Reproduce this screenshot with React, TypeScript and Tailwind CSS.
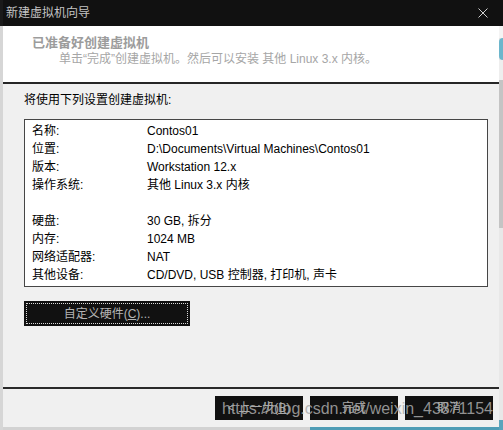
import React from "react";

const rows: [string, string][] = [
  ["名称:", "Contos01"],
  ["位置:", "D:\\Documents\\Virtual Machines\\Contos01"],
  ["版本:", "Workstation 12.x"],
  ["操作系统:", "其他 Linux 3.x 内核"],
  ["", ""],
  ["硬盘:", "30 GB, 拆分"],
  ["内存:", "1024 MB"],
  ["网络适配器:", "NAT"],
  ["其他设备:", "CD/DVD, USB 控制器, 打印机, 声卡"],
];

function FooterButton({ children }: { children: React.ReactNode }) {
  return (
    <div className="w-[88px] h-[24px] bg-[#111] flex items-center justify-center text-[12px] text-[#a8a8a8]">
      {children}
    </div>
  );
}

export default function App() {
  return (
    <div className="w-[503px] h-[430px] overflow-hidden relative flex bg-[#e4e4e4] font-['Liberation_Sans','Noto_Sans_CJK_SC',sans-serif] text-[12px]">
      <div className="w-[3px] flex flex-col">
        <div className="h-[26px] bg-[#1a1a1a]" />
        <div className="flex-1 bg-[#d6d6d6]" />
      </div>

      <div className="w-[496px] flex flex-col">
        <div className="h-[427px] flex flex-col bg-[#f0f0f0]">
          {/* title bar */}
          <div className="h-[26px] bg-[#111] flex items-center justify-between pl-[3px] pr-[11px]">
            <span className="text-[12px] text-[#c4c4c4] leading-none">新建虚拟机向导</span>
            <svg width="10" height="10" viewBox="0 0 10 10" className="text-[#cfcfcf]">
              <path d="M0.5 0.5 L9.5 9.5 M9.5 0.5 L0.5 9.5" stroke="currentColor" strokeWidth="1" />
            </svg>
          </div>

          {/* header */}
          <div className="h-[56px] bg-white pl-[29px] pt-[8px]">
            <div className="text-[13px] leading-[17px] font-bold text-[#9c9c9c]">已准备好创建虚拟机</div>
            <div className="pl-[27px] text-[12px] leading-[17px] text-[#a6a6a6]">
              单击“完成”创建虚拟机。然后可以安装 其他 Linux 3.x 内核。
            </div>
          </div>
          <div className="h-[2px] bg-[#262626]" />

          {/* body */}
          <div className="flex-1 flex flex-col pl-[21px] pt-[7px]">
            <div className="leading-[18px] text-black">将使用下列设置创建虚拟机:</div>
            <div className="mt-[10px] w-[464px] border border-[#464646] bg-white pl-[7px] py-[2px]">
              {rows.map(([label, value], i) => (
                <div key={i} className="h-[18px] leading-[18px] flex text-black">
                  <span className="w-[115px] shrink-0">{label}</span>
                  <span>{value}</span>
                </div>
              ))}
            </div>
            <div className="mt-[14px] w-[166px] h-[25px] bg-[#111] p-[2px]">
              <div className="h-full border border-dotted border-[#d8d8d8] flex items-center justify-center text-[#b4b4b4]">
                自定义硬件(<span className="underline">C</span>)...
              </div>
            </div>
          </div>

          <div className="h-[2px] bg-[#2a2a2a]" />

          {/* footer */}
          <div className="h-[38px] flex justify-end gap-[7px] pt-[7px] pr-[6px]">
            <FooterButton>
              &lt; 上一步(<span className="underline">B</span>)
            </FooterButton>
            <FooterButton>完成</FooterButton>
            <FooterButton>取消</FooterButton>
          </div>
        </div>
        <div className="flex-1 flex">
          <div className="w-[307px] bg-[#d2d2d2]" />
          <div className="flex-1 bg-[#4f9db6]" />
        </div>
      </div>

      <div className="flex-1 flex flex-col">
        <div className="h-[26px] bg-[#111]" />
        <div className="h-[12px] bg-[#f4f4f4]" />
        <div className="h-[22px] bg-[#6cb6cc] rounded-l-full" />
        <div className="h-[20px] bg-[#eeeeee]" />
        <div className="h-[148px] bg-[#c4c4c4]" />
        <div className="flex-1 bg-[#e8e8e8]" />
        <div className="h-[10px] bg-[#5aa4bc]" />
      </div>

      {/* watermark */}
      <div className="absolute left-[222px] top-[400px] text-[16px] leading-[18px] font-['Liberation_Sans',sans-serif] text-[rgba(170,170,170,0.85)] whitespace-nowrap pointer-events-none">
        https://blog.csdn.net/weixin_43871154
      </div>
    </div>
  );
}
